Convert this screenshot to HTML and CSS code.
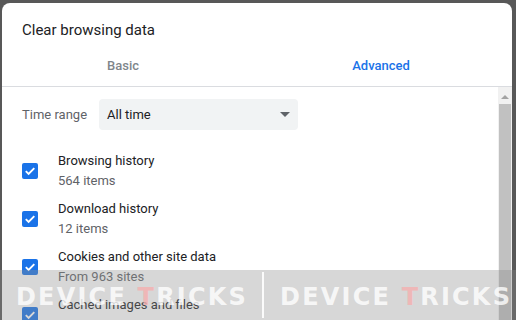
FILE: index.html
```html
<!DOCTYPE html>
<html>
<head>
<meta charset="utf-8">
<link rel="stylesheet" href="styles.css">
</head>
<body>
<div class="dialog">
  <div class="title">Clear browsing data</div>
  <div class="tabs">
    <div class="tab tab-basic">Basic</div>
    <div class="tab tab-adv">Advanced</div>
  </div>
  <div class="body">
    <div class="content">
      <div class="range">
        <div class="range-label">Time range</div>
        <div class="select">
          <span>All time</span>
          <span class="caret"></span>
        </div>
      </div>
      <div class="item">
        <div class="check"><svg viewBox="0 0 16 16" width="16" height="16"><path d="M3.8 8.2 L6.6 11 L12.3 5.2" fill="none" stroke="#fff" stroke-width="1.9"/></svg></div>
        <div class="texts"><div class="main">Browsing history</div><div class="sub">564 items</div></div>
      </div>
      <div class="item">
        <div class="check"><svg viewBox="0 0 16 16" width="16" height="16"><path d="M3.8 8.2 L6.6 11 L12.3 5.2" fill="none" stroke="#fff" stroke-width="1.9"/></svg></div>
        <div class="texts"><div class="main">Download history</div><div class="sub">12 items</div></div>
      </div>
      <div class="item">
        <div class="check"><svg viewBox="0 0 16 16" width="16" height="16"><path d="M3.8 8.2 L6.6 11 L12.3 5.2" fill="none" stroke="#fff" stroke-width="1.9"/></svg></div>
        <div class="texts"><div class="main">Cookies and other site data</div><div class="sub">From 963 sites</div></div>
      </div>
      <div class="item item-last">
        <div class="check"><svg viewBox="0 0 16 16" width="16" height="16"><path d="M3.8 8.2 L6.6 11 L12.3 5.2" fill="none" stroke="#fff" stroke-width="1.9"/></svg></div>
        <div class="texts"><div class="main">Cached images and files</div></div>
      </div>
    </div>
    <div class="scrollbar">
      <div class="arrow"></div>
      <div class="thumb"></div>
    </div>
  </div>
</div>
<div class="watermark">
  <span class="wm wm-1">DEVICE <span class="t">T</span>RICKS</span>
  <span class="sep"></span>
  <span class="wm wm-2">DEVICE <span class="t">T</span>RICKS</span>
</div>
</body>
</html>
```
FILE: styles.css
```css
html, body {
  margin: 0;
  padding: 0;
  height: 320px;
  overflow: hidden;
}
body {
  background: #585858;
  font-family: Roboto, "Liberation Sans", sans-serif;
  position: relative;
}
.dialog {
  margin: 3px 4px 0 2px;
  height: 317px;
  background: #fff;
  border-radius: 8px 8px 0 0;
  display: flex;
  flex-direction: column;
  overflow: hidden;
}
.title {
  padding: 17px 0 0 20px;
  height: 20px;
  line-height: 20px;
  font-size: 15px;
  color: #202124;
}
.tabs {
  display: grid;
  grid-template-columns: 242px 274px;
  height: 46px;
  border-bottom: 1px solid #dadce0;
}
.tab {
  display: flex;
  align-items: center;
  justify-content: center;
  padding-top: 4px;
  font-size: 13px;
  font-weight: 500;
}
.tab-basic { color: #80868b; }
.tab-adv { color: #1a73e8; }
.body {
  flex: 1;
  display: flex;
  min-height: 0;
}
.content {
  flex: 1;
  padding: 12px 0 0 20px;
}
.range {
  display: flex;
  align-items: center;
  height: 31px;
  margin-bottom: 17px;
}
.range-label {
  width: 77px;
  font-size: 13px;
  color: #5f6368;
}
.select {
  width: 199px;
  height: 31px;
  box-sizing: border-box;
  background: #f1f3f4;
  border-radius: 4px;
  display: flex;
  align-items: center;
  justify-content: space-between;
  padding: 0 8px 0 8px;
  font-size: 13px;
  color: #202124;
}
.caret {
  width: 0;
  height: 0;
  border-left: 5px solid transparent;
  border-right: 5px solid transparent;
  border-top: 5px solid #5f6368;
}
.item {
  display: flex;
  align-items: center;
  height: 48px;
}
.item-last {
  align-items: flex-start;
  padding-top: 4px;
}
.item-last .check { margin-top: 12px; }
.check {
  width: 16px;
  height: 16px;
  background: #1a73e8;
  border-radius: 2px;
  margin-right: 20px;
  display: flex;
  flex-shrink: 0;
}
.texts {
  font-size: 13px;
  line-height: 20px;
}
.main { color: #202124; }
.sub { color: #5f6368; }
.scrollbar {
  width: 14px;
  background: #f1f1f1;
  display: flex;
  flex-direction: column;
  align-items: center;
}
.arrow {
  margin-top: 8px;
  width: 0;
  height: 0;
  border-left: 4px solid transparent;
  border-right: 4px solid transparent;
  border-bottom: 4px solid #a3a3a3;
}
.thumb {
  margin-top: 5px;
  width: 12px;
  flex: 1;
  background: #c1c1c1;
}
.watermark {
  position: absolute;
  left: 0;
  top: 270px;
  width: 516px;
  height: 50px;
  background: rgba(140, 140, 140, 0.35);
  display: flex;
  align-items: center;
}
.wm {
  font-family: "DejaVu Sans", sans-serif;
  font-weight: bold;
  font-size: 24px;
  letter-spacing: 2.2px;
  color: rgba(255, 255, 255, 0.8);
  white-space: nowrap;
  margin-top: 4px;
}
.wm .t { color: rgba(245, 175, 175, 0.8); }
.wm-1 { margin-left: 16px; }
.sep {
  width: 2px;
  height: 46px;
  background: rgba(255, 255, 255, 0.9);
  margin: 0 16px 0 14px;
}
```
